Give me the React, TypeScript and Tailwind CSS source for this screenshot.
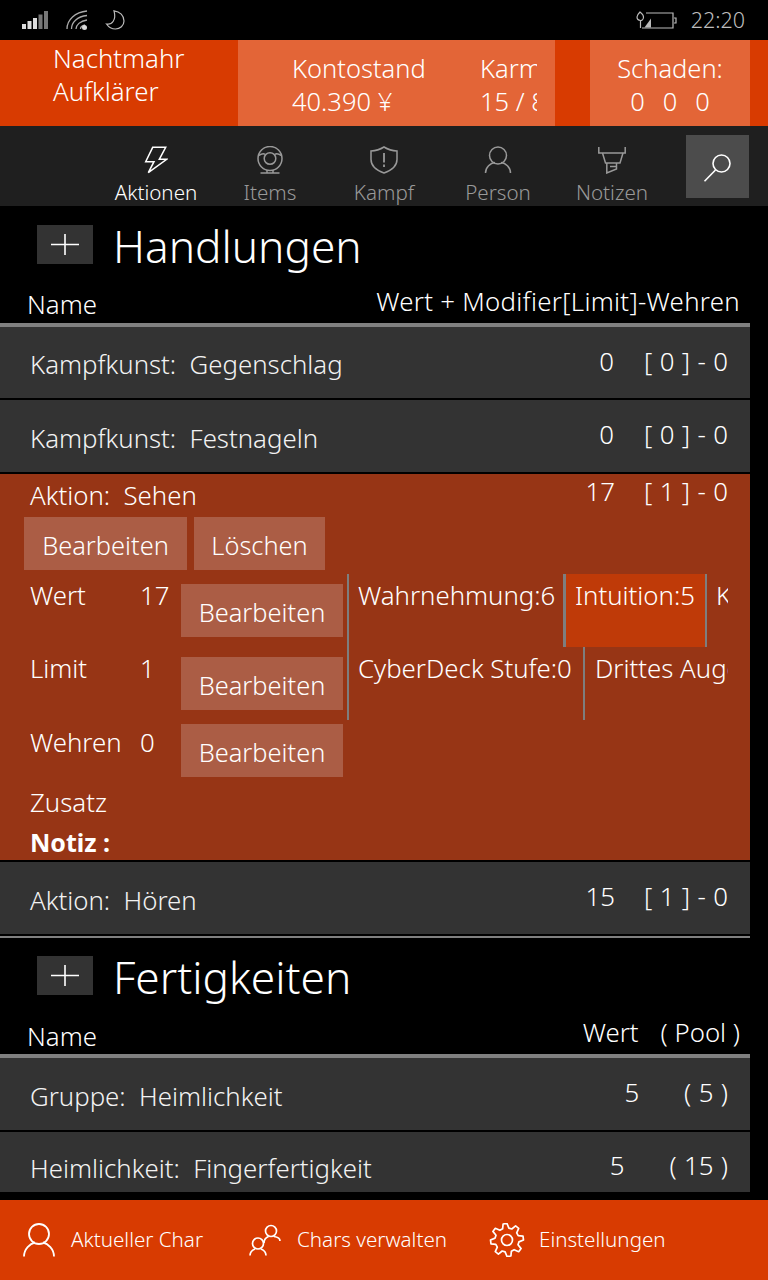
import React from "react";

const gearPath = (() => {
  // 8 tooth cog outline
  const pts: string[] = [];
  const cx = 18;
  const cy = 17;
  for (let i = 0; i < 8; i++) {
    const a = (i * Math.PI) / 4 - Math.PI / 8;
    const step = Math.PI / 4;
    const p = (r: number, t: number) => `${(cx + r * Math.cos(t)).toFixed(1)} ${(cy + r * Math.sin(t)).toFixed(1)}`;
    pts.push(`${i === 0 ? "M" : "L"}${p(12, a + step * 0.02)}`);
    pts.push(`L${p(16.5, a + step * 0.2)}`);
    pts.push(`L${p(16.5, a + step * 0.5)}`);
    pts.push(`L${p(12, a + step * 0.7)}`);
  }
  return pts.join(" ") + " Z";
})();

function PlusBox() {
  return (
    <div className="w-14 h-[39px] bg-[#333333] flex items-center justify-center shrink-0">
      <svg width="28" height="21" viewBox="0 0 28 21" fill="none" stroke="#fff" strokeWidth="1.6">
        <path d="M0 10.5H28M14 0V21" />
      </svg>
    </div>
  );
}

function NavItem({ label, active, children }: { label: string; active?: boolean; children: React.ReactNode }) {
  return (
    <div className={`w-[114px] flex flex-col items-center ${active ? "text-white" : "text-[#999999]"}`}>
      <div className="h-7 mt-[20px] flex items-center justify-center">{children}</div>
      <div className="text-[20.6px] leading-[26px] mt-[5px] whitespace-nowrap">{label}</div>
    </div>
  );
}

function Row({ name, value, right, gap = "gap-[30px]", h = "h-[72px]", last }: { name: string; value: string; right: string; gap?: string; h?: string; last?: boolean }) {
  return (
    <div className={`${last ? "h-[60px] items-start pt-[20px]" : `${h} items-center`} bg-[#333333] flex justify-between pl-[30px] pr-[22px] text-[25.8px] text-white`}>
      <div className={`whitespace-pre leading-8 text-[#f2f2f2] ${last ? "pt-0" : "pt-[3px]"}`}>{name}</div>
      <div className={`flex ${gap} whitespace-pre leading-8 [word-spacing:0.7px] ${last ? "-mt-[3px]" : "pb-[4px]"}`}>
        <span>{value}</span>
        <span>{right}</span>
      </div>
    </div>
  );
}

function EditButton({ className = "" }: { className?: string }) {
  return <div className={`h-[53px] pt-[3px] bg-[#ab5d45] flex items-center justify-center text-[25.4px] text-white ${className}`}>Bearbeiten</div>;
}

function ValueRow({ label, value, className = "" }: { label: string; value: string; className?: string }) {
  return (
    <div className={`flex whitespace-nowrap ${className}`}>
      <div className="w-[110px] leading-8">{label}</div>
      <div className="w-[41px] leading-8">{value}</div>
    </div>
  );
}

export default function App() {
  return (
    <div className="w-[768px] h-[1280px] bg-black text-white overflow-hidden flex flex-col font-['Noto_Sans','Open_Sans',sans-serif] font-[350]">
      {/* status bar */}
      <div className="h-10 shrink-0 flex items-center justify-between pl-[22px] pr-[23px]">
        <div className="flex items-center">
          <svg width="26" height="20" viewBox="0 0 26 20">
            <rect x="0" y="14" width="4" height="5" fill="#ddd" />
            <rect x="5.5" y="11" width="4" height="8" fill="#ddd" />
            <rect x="11" y="8" width="4" height="11" fill="#ddd" />
            <rect x="16.5" y="4.5" width="4" height="14.5" fill="#777" />
            <rect x="22" y="1" width="4" height="18" fill="#777" />
          </svg>
          <svg className="ml-[18px]" width="22" height="20" viewBox="0 0 22 20" fill="none" stroke="#aaa" strokeWidth="1.3">
            <path d="M1 19C1 10 9 2 21 1" />
            <path d="M5.5 19C5.5 12.500 11 6.500 21 5.500" />
            <path d="M10 19C10 15 14 11 21 10" />
            <path d="M14.5 19C14.500 17 16.500 15.500 19 15" />
            <circle cx="18.500" cy="17.500" r="2.500" fill="#ddd" stroke="none" />
          </svg>
          <svg className="ml-[17px]" width="20" height="20" viewBox="0 0 20 20" fill="none" stroke="#bbb" strokeWidth="1.2">
            <path d="M9 0.800C15 1.500 19 5.500 19 11C19 15.500 15 19 10.500 19C6.500 19 3.500 17 1.500 14C7 15 11.500 10 9 0.800Z" />
          </svg>
        </div>
        <div className="flex items-center">
          <svg width="41" height="20" viewBox="0 0 41 20" fill="none" stroke="#bbb" strokeWidth="1.2">
            <path d="M4 2C6 3.500 7.500 5 7.500 7C7.500 9 6 10.500 4.500 10.500C2.500 10.500 1 9 1 7C1 5 2.500 3.500 4 2ZM4.500 10.500V18" />
            <path d="M10 3H37V18H6" />
            <path d="M38 8H40V13H38" />
            <path d="M8.500 17.500H15V8.500Z" fill="#bbb" stroke="none" />
          </svg>
          <div className="ml-[14px] text-[21.5px] leading-none text-[#bdbdbd]">22:20</div>
        </div>
      </div>

      {/* character header */}
      <div className="h-[86px] shrink-0 bg-[#d83b01] flex">
        <div className="w-[238px] pl-[53px] pt-[2px] text-[25.8px] leading-[33px]">
          <div>Nachtmahr</div>
          <div>Aufklärer</div>
        </div>
        <div className="w-[317px] bg-[#e36537] flex text-[25.5px] leading-[33px] pt-[12px]">
          <div className="ml-[54px] w-[188px]">
            <div>Kontostand</div>
            <div>40.390 ¥</div>
          </div>
          <div className="w-[57px] overflow-hidden whitespace-nowrap">
            <div>Karma</div>
            <div>15 / 84</div>
          </div>
        </div>
        <div className="w-[160px] ml-[35px] bg-[#e36537] text-center text-[25.5px] leading-[33px] pt-[12px]">
          <div>Schaden:</div>
          <div className="flex justify-center gap-[18px]">
            <span>0</span>
            <span>0</span>
            <span>0</span>
          </div>
        </div>
      </div>

      {/* nav */}
      <div className="h-20 shrink-0 bg-[#1f1f1f] flex pl-[99px]">
        <NavItem label="Aktionen" active>
          <svg width="24" height="28" viewBox="0 0 24 28" fill="none" stroke="#fff" strokeWidth="1.5">
            <path d="M8.700 1.300H21.700L15.300 13.300H22.700L4.300 26.700L10 15.700H1.700Z" />
          </svg>
        </NavItem>
        <NavItem label="Items">
          <svg width="28" height="28" viewBox="0 0 28 28" fill="none" stroke="#999" strokeWidth="1.5">
            <circle cx="14" cy="12.500" r="12" />
            <circle cx="14" cy="12.500" r="5.800" />
            <path d="M2.500 9.500C6 7.500 8 7.500 9 8.500M25.500 9.500C22 7.500 20 7.500 19 8.500" />
            <path d="M11 24V26.500M17 24V26.500M4.500 27H23.500" />
          </svg>
        </NavItem>
        <NavItem label="Kampf">
          <svg width="28" height="28" viewBox="0 0 28 28" fill="none" stroke="#999" strokeWidth="1.5">
            <path d="M14 1C18 3.500 22 4.800 27 5V13.500C27 20 21 24.500 14 27C7 24.500 1 20 1 13.500V5C6 4.800 10 3.500 14 1Z" />
            <path d="M14 7V16.500M14 18.500V21" strokeWidth="1.800" />
          </svg>
        </NavItem>
        <NavItem label="Person">
          <svg width="28" height="28" viewBox="0 0 28 28" fill="none" stroke="#999" strokeWidth="1.5">
            <circle cx="14" cy="9.500" r="8.500" />
            <path d="M1.500 27C1.500 21 6.500 17 11 16.500M26.500 27C26.500 21 21.500 17 17 16.500" />
          </svg>
        </NavItem>
        <NavItem label="Notizen">
          <svg width="28" height="28" viewBox="0 0 28 28" fill="none" stroke="#999" strokeWidth="1.5">
            <path d="M0.800 1V7H27.200V1" />
            <path d="M4.500 7L7.500 17H22L25 7" />
            <path d="M8.800 17V27L18.500 23V17" />
            <path d="M12 20.500H18.500" />
          </svg>
        </NavItem>
        <div className="w-[63px] h-[63px] ml-[17px] mt-[9px] bg-[#4c4c4c] flex items-center justify-center">
          <svg width="30" height="30" viewBox="0 0 30 30" fill="none" stroke="#fff" strokeWidth="1.6">
            <circle cx="18.500" cy="11.500" r="8.500" />
            <path d="M12.500 18L1.500 29.200" />
          </svg>
        </div>
      </div>

      {/* scrolling content */}
      <div className="flex-1 min-h-0 overflow-hidden pr-[18px]">
        {/* Handlungen */}
        <div className="pt-[19px] pl-[37px] h-[58px] flex items-start">
          <PlusBox />
          <div className="ml-[20px] -mt-[6px] text-[44.2px] leading-[54px]">Handlungen</div>
        </div>
        <div className="h-[59px] flex justify-between pl-[27px] pr-[10px] text-[25.8px] leading-8">
          <div className="pt-[24px]">Name</div>
          <div className="pt-[21px] tracking-[0.3px]">Wert + Modifier[Limit]-Wehren</div>
        </div>
        <div className="h-1 bg-[#808080]" />
        <div className="flex flex-col gap-[2px]">
          <Row name="Kampfkunst:  Gegenschlag" value="0" right="[ 0 ] - 0" h="h-[71px]" />
          <Row name="Kampfkunst:  Festnageln" value="0" right="[ 0 ] - 0" />

          {/* expanded action */}
          <div className="h-[386px] bg-[#973515] text-[25.8px] flex flex-col">
            <div className="h-[43px] flex justify-between pl-[30px] pr-[22px]">
              <div className="whitespace-pre leading-8 pt-[5px]">Aktion:  Sehen</div>
              <div className="flex gap-[29px] whitespace-pre leading-8 pt-[1px] [word-spacing:0.7px]">
                <span>17</span>
                <span>[ 1 ] - 0</span>
              </div>
            </div>
            <div className="flex gap-[7px] pl-[24px]">
              <EditButton className="w-[163px]" />
              <div className="w-[131px] h-[53px] pt-[3px] bg-[#ab5d45] flex items-center justify-center text-[25.4px] text-white">Löschen</div>
            </div>
            <div className="flex mt-[4px]">
              <div className="w-[347px] shrink-0">
                <div className="h-[73px] pl-[30px] flex">
                  <ValueRow label="Wert" value="17" className="pt-[5px]" />
                  <EditButton className="w-[162px] mt-[10px]" />
                </div>
                <div className="h-[67px] pl-[30px] flex">
                  <ValueRow label="Limit" value="1" className="pt-[5px]" />
                  <EditButton className="w-[162px] mt-[10px]" />
                </div>
                <div className="h-[60px] pl-[30px] flex">
                  <ValueRow label="Wehren" value="0" className="pt-[12px]" />
                  <EditButton className="w-[162px] mt-[10px]" />
                </div>
              </div>
              <div className="w-[381px] overflow-hidden">
                <div className="w-[381px] h-[146px] border-l-2 border-[#7e7e7e] whitespace-nowrap">
                  <div className="flex h-[73px]">
                    <div className="w-[214px] pl-[9px] pt-[5px] leading-8 shrink-0">Wahrnehmung:6</div>
                    <div className="w-[144px] h-[73px] border-l-[3px] border-r-2 border-[#7e7e7e] bg-[#bf3a08] pl-[9px] pt-[5px] leading-8 shrink-0">Intuition:5</div>
                    <div className="pl-[9px] pt-[5px] leading-8">Konstitution:5</div>
                  </div>
                  <div className="flex h-[73px]">
                    <div className="w-[234px] pl-[9px] pt-[5px] leading-8 shrink-0">CyberDeck Stufe:0</div>
                    <div className="border-l-2 border-[#7e7e7e] pl-[10px] pt-[5px] leading-8">Drittes Auge:0</div>
                  </div>
                </div>
              </div>
            </div>
            <div className="pl-[30px] leading-8 mt-[12px]">Zusatz</div>
            <div className="pl-[30px] leading-8 mt-[8px] font-bold text-[25px]">Notiz :</div>
          </div>

          <Row name="Aktion:  Hören" value="15" right="[ 1 ] - 0" gap="gap-[29px]" />
        </div>
        <div className="h-[2px] mt-[2px] bg-[#808080]" />

        {/* Fertigkeiten */}
        <div className="pt-[18px] pl-[37px] h-[57px] flex items-start">
          <PlusBox />
          <div className="ml-[20px] -mt-[6px] text-[44.2px] leading-[54px]">Fertigkeiten</div>
        </div>
        <div className="h-[59px] flex justify-between pl-[27px] pr-[10px] text-[25.8px] leading-8">
          <div className="pt-[25px]">Name</div>
          <div className="flex gap-[22px] whitespace-pre pt-[21px]">
            <span>Wert</span>
            <span>( Pool )</span>
          </div>
        </div>
        <div className="h-1 bg-[#808080]" />
        <div className="flex flex-col gap-[2px]">
          <Row name="Gruppe:  Heimlichkeit" value="5" right="( 5 )" gap="gap-[45px]" />
          <Row name="Heimlichkeit:  Fingerfertigkeit" value="5" right="( 15 )" gap="gap-[45px]" last />
        </div>
      </div>

      {/* bottom bar */}
      <div className="h-20 shrink-0 bg-[#d83b01] flex items-center pl-[23px] text-[20.6px]">
        <div className="w-[226px] flex items-center">
          <svg width="32" height="34" viewBox="0 0 32 34" fill="none" stroke="#fff" strokeWidth="1.800">
            <circle cx="16" cy="11" r="10" />
            <path d="M1 33.500C1 26 7 20.500 12 19.500M31 33.500C31 26 25 20.500 20 19.500" />
          </svg>
          <span className="ml-[16px] -mt-[2px]">Aktueller Char</span>
        </div>
        <div className="w-[240px] flex items-center">
          <svg width="32" height="32" viewBox="0 0 32 32" fill="none" stroke="#fff" strokeWidth="1.700">
            <circle cx="22" cy="7" r="5.500" />
            <path d="M15 19C15 15.500 17 13.500 19.500 12.500M31 17C31 15 28.500 13 25 12.500" />
            <circle cx="9" cy="19.500" r="5.500" />
            <path d="M1 31.500C1 28 3.500 26 6 25M17 31.500C17 28 14.500 26 12 25" />
          </svg>
          <span className="ml-[16px] -mt-[2px]">Chars verwalten</span>
        </div>
        <div className="flex items-center">
          <svg width="36" height="34" viewBox="0 0 36 34" fill="none" stroke="#fff" strokeWidth="1.700" strokeLinejoin="round">
            <path d={gearPath} />
            <circle cx="18" cy="17" r="5.500" />
          </svg>
          <span className="ml-[14px] -mt-[2px]">Einstellungen</span>
        </div>
      </div>
    </div>
  );
}
